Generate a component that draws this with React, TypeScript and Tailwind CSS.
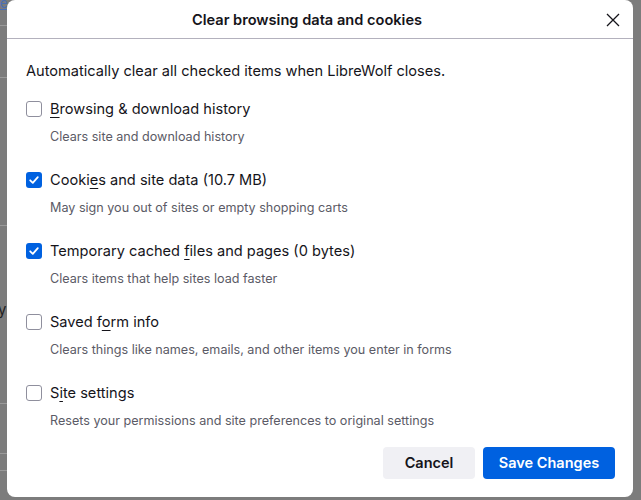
import React from "react";

function Check({ checked }: { checked: boolean }) {
  if (checked) {
    return (
      <span className="flex h-[16px] w-[16px] shrink-0 items-center justify-center rounded-[3px] bg-[#0061e0]">
        <svg width="12" height="12" viewBox="0 0 12 12" fill="none">
          <path d="M2.2 6.3 L4.8 8.8 L9.8 3.2" stroke="white" strokeWidth="1.8" strokeLinecap="round" strokeLinejoin="round" />
        </svg>
      </span>
    );
  }
  return <span className="block h-[16px] w-[16px] shrink-0 rounded-[3px] border border-[#8f8f9d] bg-white" />;
}

type Item = { pre: string; key: string; post: string; desc: string; checked: boolean };

const items: Item[] = [
  { pre: "", key: "B", post: "rowsing & download history", desc: "Clears site and download history", checked: false },
  { pre: "Cooki", key: "e", post: "s and site data (10.7 MB)", desc: "May sign you out of sites or empty shopping carts", checked: true },
  { pre: "Temporary cached ", key: "f", post: "iles and pages (0 bytes)", desc: "Clears items that help sites load faster", checked: true },
  { pre: "Saved f", key: "o", post: "rm info", desc: "Clears things like names, emails, and other items you enter in forms", checked: false },
  { pre: "S", key: "i", post: "te settings", desc: "Resets your permissions and site preferences to original settings", checked: false },
];

export default function App() {
  return (
    <div
      className="relative h-[500px] w-[641px] overflow-hidden bg-[#7c7c7c]"
      style={{ fontFamily: "Inter, 'Noto Sans', sans-serif" }}
    >
      {/* backdrop page remnants */}
      <div className="absolute left-0 top-[25px] h-px w-[8px] bg-[#9a9a9a]" />
      <div className="absolute left-0 top-[77px] h-px w-[8px] bg-[#9a9a9a]" />
      <div className="absolute left-0 top-[225px] h-px w-[8px] bg-[#9a9a9a]" />
      <div className="absolute left-0 top-[403px] h-px w-[8px] bg-[#9a9a9a]" />
      <div className="absolute left-0 top-[453px] h-px w-[8px] bg-[#9a9a9a]" />
      <div className="absolute left-0 top-[470px] h-px w-[8px] bg-[#9a9a9a]" />
      <div className="absolute left-0 top-[-4px] text-[13px] leading-[14px] text-[#4a6fb5] underline">e</div>
      <div className="absolute left-[-2px] top-[300px] text-[15px] leading-[20px] text-[#222]">y</div>

      <div className="absolute left-[7px] top-0 flex h-[497px] w-[626px] flex-col rounded-[8px] bg-white text-[#15141a]">
        <div className="relative flex h-[39px] items-center justify-center border-b border-[#b3b1bd] pr-[26px] pt-[2px]">
          <span className="text-[14.6px] font-semibold leading-[20px]">Clear browsing data and cookies</span>
          <svg className="absolute right-[12px] top-[12px]" width="16" height="16" viewBox="0 0 16 16">
            <path d="M2 2 L14 14 M14 2 L2 14" stroke="#15141a" strokeWidth="1.3" />
          </svg>
        </div>

        <div className="flex flex-1 flex-col pl-[19px] pr-[18px] pt-[22px] pb-[18px]">
          <p className="text-[14.6px] leading-[20px]">Automatically clear all checked items when LibreWolf closes.</p>
          <div className="mt-[18px] flex flex-col gap-[24px]">
            {items.map((it, i) => (
              <div key={i} className="flex flex-col">
                <div className="flex h-[20px] items-center gap-[8px]">
                  <Check checked={it.checked} />
                  <span className="text-[14.6px] leading-[20px]">
                    {it.pre}
                    <span className="underline underline-offset-[3px]">{it.key}</span>
                    {it.post}
                  </span>
                </div>
                <div className="mt-[9px] pl-[24px] text-[12.6px] leading-[18px] text-[#5b5b66]">{it.desc}</div>
              </div>
            ))}
          </div>
          <div className="mt-auto flex justify-end gap-[8px]">
            <button className="h-[32px] w-[92px] rounded-[4px] bg-[#f0f0f4] text-[14.5px] font-semibold text-[#15141a]">Cancel</button>
            <button className="h-[32px] w-[132px] rounded-[4px] bg-[#0061e0] text-[14.5px] font-semibold text-white">Save Changes</button>
          </div>
        </div>
      </div>
    </div>
  );
}
